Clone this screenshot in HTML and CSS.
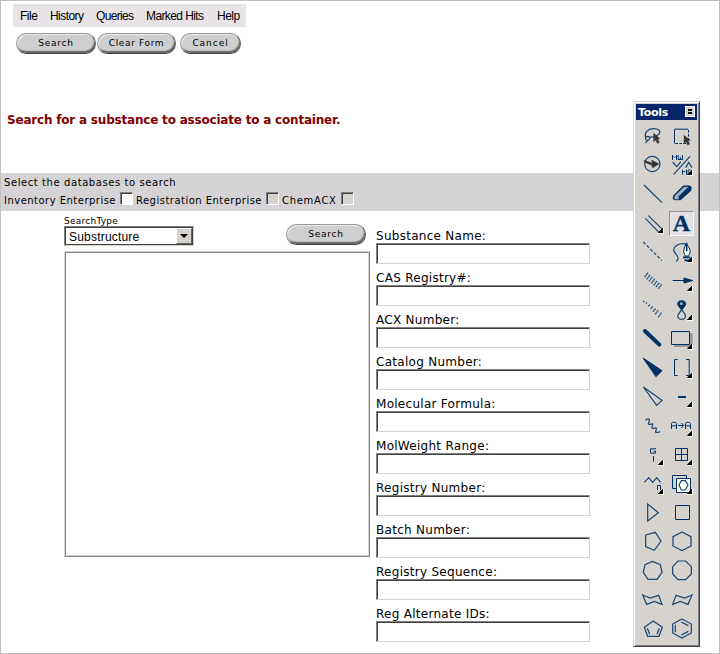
FILE: index.html
```html
<!DOCTYPE html>
<html lang="en">
<head>
<meta charset="utf-8">
<title>Substance search</title>
<link rel="stylesheet" href="styles.css">
</head>
<body>
<div class="page">
  <nav class="menu"><a class="m1">File</a><a class="m2">History</a><a class="m3">Queries</a><a class="m4">Marked Hits</a><a class="m5">Help</a></nav>
  <div class="actions">
    <button class="pill">Search</button><button class="pill clear">Clear Form</button><button class="pill cancel">Cancel</button>
  </div>
  <h1>Search for a substance to associate to a container.</h1>
  <section class="databases">
    <p>Select the databases to search</p>
    <div class="checks">
      <span class="c1">Inventory Enterprise</span><i class="box on"></i>
      <span class="c2">Registration Enterprise</span><i class="box"></i>
      <span class="c3">ChemACX</span><i class="box"></i>
    </div>
  </section>
  <main>
    <div class="left">
      <div class="type-row">
        <div>
          <div class="type-label">SearchType</div>
          <div class="select"><span>Substructure</span><i class="drop"></i></div>
        </div>
        <button class="pill">Search</button>
      </div>
      <div class="canvas"><div></div></div>
    </div>
    <form class="fields">
      <label><span>Substance Name:</span><input></label>
      <label><span>CAS Registry#:</span><input></label>
      <label><span>ACX Number:</span><input></label>
      <label><span>Catalog Number:</span><input></label>
      <label><span>Molecular Formula:</span><input></label>
      <label><span>MolWeight Range:</span><input></label>
      <label><span>Registry Number:</span><input></label>
      <label><span>Batch Number:</span><input></label>
      <label><span>Registry Sequence:</span><input></label>
      <label><span>Reg Alternate IDs:</span><input></label>
    </form>
  </main>
  <aside class="tools">
    <header><b>Tools</b><i class="toggle"></i></header>
    <div class="grid">
      <div><svg viewBox="33 72 87 87"><path class="soft" d="M60 128q-10-3-7-9c4-6 14-3 12 3s-12 8-12 14M53 118c-5-14 6-25 22-26s24 7 19 15c-4 6-16 10-31 11"/><path class="arrow" d="M77 106v25l6-5 5 10 6-3-5-10 7-1z"/></svg></div>
      <div><svg viewBox="120 72 87 87"><path d="M181 93.500H139.500v43"/><path d="M181.500 96v40.500H142" stroke-dasharray="8 4"/><path class="arrow" d="M168 112v24l6-5 5 10 6-3-5-10 7-1z"/></svg></div>

      <div><svg viewBox="33 159 87 87"><circle class="soft" cx="73" cy="198" r="23"/><path class="arrow" d="M48 187l25 8-2-9 22 12-20 12-1-8-22-9z"/></svg></div>
      <div class="more"><svg viewBox="120 159 87 87"><path d="M133.500 186v-15M136 175l3 3 3-3M145.500 171v15M150.500 171v14M157 177v8M163.500 171v14M150 184.500h14"/><path class="soft" d="M186 175l-49 54M134 192l12 14 12-14M173 209l9-16 10 16"/><path d="M163.500 230v-15M166 219l3 3 3-3M175.500 215v15M180.500 230v-14h7"/></svg></div>

      <div><svg viewBox="33 246 87 87"><path class="line" d="M48 261l54 53"/></svg></div>
      <div><svg viewBox="120 246 87 87"><path class="fill" stroke-linejoin="round" d="M136 294l30-30h20l3 3v10l-31 28h-20l-2-3z"/><path fill="#9fb0c0" stroke="none" d="M139 295l29-28h13l-29 28v9h-12z"/></svg></div>

      <div class="more"><svg viewBox="33 333 87 87"><path class="line" d="M52 361l42 43M61 353l42 41"/></svg></div>
      <div class="chosen"><span>A</span></div>

      <div><svg viewBox="33 6 87 87"><path class="line" stroke-dasharray="9 6" d="M46 18l55 55"/></svg></div>
      <div class="more"><svg viewBox="120 6 87 87"><path class="soft" d="M175 25c-20-8-40 7-37 20 2 9 14 13 12 24l-5 8"/><path fill="#fff" d="M175 23q-9 14-8 25l5 12h10l5-12q0-11-12-25z"/><path d="M176 20v26M165 64h22M169 73h16" stroke-width="5"/></svg></div>

      <div><svg viewBox="33 93 87 87"><path class="line" d="M50 123l10-13M56 130l10-13M63 136l10-13M70 142l10-13M77 148l10-13M84 153l10-13M91 158l10-13" stroke-dasharray="5 1"/></svg></div>
      <div class="more"><svg viewBox="120 93 87 87"><path d="M134 133.500h45"/><path class="fill" d="M168 126l26 7.500-26 7.500z"/></svg></div>

      <div><svg viewBox="33 180 87 87"><path class="line" d="M46 198l3-3M54 203l3-4M61 211l5-6M68 219l6-8M75 227l8-10M82 235l9-13M91 244l10-15" stroke-dasharray="5 1"/></svg></div>
      <div class="more"><svg viewBox="120 180 87 87"><path class="fill" d="M161 194c-11 0-15 9-10 15l10 14 10-14c5-6 1-15-10-15z"/><path class="soft" d="M161 221l-10 14c-4 7 0 15 10 15s14-8 10-15z"/><circle cx="160" cy="203" r="4" fill="#a7bdcf" stroke="none"/></svg></div>

      <div><svg viewBox="33 267 87 87"><path d="M51 285l43 41" stroke-width="12" stroke-linecap="round"/></svg></div>
      <div class="more"><svg viewBox="120 267 87 87"><path fill="#98979e" stroke="none" d="M138 292h56v41h-56z"/><path fill="#d6d3ce" d="M130.500 286.500h54v39h-54z"/></svg></div>

      <div><svg viewBox="33 0 87 87"><path class="fill" d="M45 12l57 38-18 18z"/></svg></div>
      <div class="more"><svg viewBox="120 0 87 87"><path d="M149 16.500h-9.500v48h9.500M174 16.500h9.500v48h-9.500"/></svg></div>

      <div><svg viewBox="33 87 87 87"><path class="line" d="M46 99l56 40-16 15z"/></svg></div>
      <div class="more"><svg viewBox="120 87 87 87"><path d="M150 129h24" stroke-width="6"/></svg></div>

      <div><svg viewBox="33 174 87 87"><path class="soft" d="M53 200c2-7 12-8 11 0s-6 10-1 11 12-5 11 2-6 9 0 10 11-5 11 2-6 9 0 10 8-2 12-1"/></svg></div>
      <div class="more"><svg viewBox="120 174 87 87"><path d="M130.500 225v-17l3-3h9l3 3v17M130 215.500h16M172.500 225v-17l3-3h9l3 3v17M172 215.500h16M150 214.500h17M160 207l7 7.500-7 7.500"/></svg></div>

      <div class="more"><svg viewBox="33 261 87 87"><path d="M84 284.500H67.500v13h15v-6H76M76.500 306v17"/></svg></div>
      <div class="more"><svg viewBox="120 261 87 87"><path d="M142.500 283.500h36v36h-36zM160.500 284v35M143 301.500h36"/></svg></div>

      <div class="more"><svg viewBox="33 0 87 87"><path class="soft" d="M49 37l13-14 12 14 12-14 12 14"/><path d="M88.500 60V46.500h9V60"/></svg></div>
      <div class="more"><svg viewBox="120 0 87 87"><path d="M133.500 16.500h42v39h-42z"/><path fill="#fff" d="M145.500 25.500h42v42h-42z"/><path class="soft" d="M160 32h12l8 13-8 15h-12l-7-15z"/></svg></div>

      <div><svg viewBox="33 87 87 87"><path class="soft" d="M59 102l32 26-32 25z"/></svg></div>
      <div><svg viewBox="120 87 87 87"><path d="M142.500 106.500h42v42h-42z"/></svg></div>

      <div><svg viewBox="33 174 87 87"><path class="soft" d="M53 195l29-8 17 26-20 28-26-11z"/></svg></div>
      <div><svg viewBox="120 174 87 87"><path class="soft" d="M162 186l27 14v28l-27 14-27-14v-28z"/></svg></div>

      <div><svg viewBox="33 261 87 87"><path class="soft" d="M73 274l24 10 5 23-15 21H60l-14-21 5-23z"/></svg></div>
      <div><svg viewBox="120 261 87 87"><path class="soft" d="M150 273h23l17 17v22l-17 17h-23l-16-17v-22z"/></svg></div>

      <div><svg viewBox="33 348 87 87"><path class="soft" d="M44 375l22 9 26-8 10 27-23-9-23 9z"/></svg></div>
      <div><svg viewBox="120 348 87 87"><path class="soft" d="M192 375l-22 9-26-8-10 27 23-9 23 9z"/></svg></div>

      <div><svg viewBox="33 435 87 87"><path class="soft" d="M76 453l27 19-10 27H59l-10-27zM58 475l7 18M94 475l-7 18"/></svg></div>
      <div><svg viewBox="120 435 87 87"><path class="soft" d="M162 447l28 15v27l-28 15-28-15v-27zM142 464v23M160 456l21 11M160 495l21-11"/></svg></div>
    </div>
  </aside>
</div>
</body>
</html>
```
FILE: styles.css
```css
* { box-sizing: border-box; }
body { margin: 0; background: #fff; color: #000; font-family: "DejaVu Sans", sans-serif; }
.page { position: relative; width: 720px; height: 654px; border: 1px solid #c0c0c0; overflow: hidden; white-space: nowrap; }
.menu { display: flex; width: 233px; height: 23px; margin: 3px 0 0 12px; padding-left: 7px; background: #e7e3e7; font: 12px/24px "Liberation Sans", sans-serif; }
.m1 { width: 30px; letter-spacing: -.5px; }
.m2 { width: 46px; letter-spacing: -.55px; }
.m3 { width: 50px; letter-spacing: -.65px; }
.m4 { width: 71px; letter-spacing: -.6px; }
.m5 { letter-spacing: -.5px; }
.actions { display: flex; gap: 1px; margin: 6px 0 0 15px; }
.pill { width: 80px; height: 21px; padding: 0 0 2px; border: 1px solid #999; border-right-color: #555; border-bottom-color: #444; border-radius: 11px; background: #cecece; box-shadow: inset 1px 1px 1px #eee, inset -1px -2px 1px #666; font: 9px/16px "DejaVu Sans", sans-serif; letter-spacing: .75px; color: #000; }
.pill.clear { width: 79px; letter-spacing: .65px; }
.pill.cancel { width: 61px; margin-left: 3px; letter-spacing: .95px; }
h1 { margin: 57px 0 0 6px; font: bold 12px/18px "DejaVu Sans", sans-serif; letter-spacing: -.2px; color: #800000; }
.databases { height: 38px; margin-top: 44px; padding-left: 3px; background: #d6d3d6; font-size: 10px; letter-spacing: .58px; }
.databases p { margin: 0; height: 18px; line-height: 19px; }
.checks { display: flex; height: 18px; line-height: 19px; }
.c1 { width: 116px; letter-spacing: .48px; }
.c2, .c3 { margin-left: 3px; }
.c2 { width: 130px; letter-spacing: .48px; }
.c3 { width: 59px; letter-spacing: .7px; }
.box { width: 13px; height: 13px; margin-top: 1px; background: #d6d3ce; border: 1px solid; border-color: #808080 #fff #fff #808080; box-shadow: inset 1px 1px #404040; }
.box.on { background: #fff; }
main { display: flex; margin: 4px 0 0 63px; }
.left { width: 312px; }
.type-row { display: flex; justify-content: space-between; width: 302px; height: 36px; }
.type-row .pill { margin-top: 9px; }
.type-label { height: 11px; font-size: 9px; line-height: 13px; letter-spacing: .25px; }
.select { display: flex; justify-content: space-between; width: 130px; height: 20px; padding: 0 0 0 4px; border: 1px solid; border-color: #808080 #d6d3ce #d6d3ce #808080; box-shadow: inset 1px 1px #404040, inset -1px -1px #404040; font: 12px/20px "Liberation Sans", sans-serif; letter-spacing: .2px; }
.drop { width: 16px; height: 16px; margin: 1px; background: #d6d3ce; border: 1px solid; border-color: #fff #666 #666 #fff; }
.drop::after { content: ""; display: block; margin: 5px 0 0 3px; width: 0; border: 4px solid transparent; border-top-color: #000; border-bottom: 0; }
.canvas { width: 306px; height: 306px; border: 1px solid; border-color: #d6d3ce #808080 #808080 #d6d3ce; }
.canvas div { height: 100%; border: 1px solid; border-color: #808080 #d6d3ce #d6d3ce #808080; }
.fields { margin-top: 12px; }
.fields label { display: block; height: 42px; font-size: 12px; letter-spacing: .28px; }
.fields span { display: block; height: 16px; line-height: 19px; }
.fields input { display: block; width: 214px; height: 21px; padding: 0 3px; border: 1px solid; border-color: #808080 #d6d3ce #d6d3ce #808080; border-radius: 0; box-shadow: inset 1px 1px #404040; outline: 0; }
.tools { position: absolute; left: 632px; top: 100px; width: 67px; height: 546px; border: 1px solid; border-color: #d6d3ce #404040 #404040 #d6d3ce; background: #d6d3ce; box-shadow: inset 1px 1px #fff, inset -1px -1px #808080; padding: 2px; }
.tools header { display: flex; justify-content: space-between; height: 16px; padding: 0 2px; background: #08246b; color: #fff; font: bold 11px/17px "DejaVu Sans", sans-serif; letter-spacing: -.3px; }
.toggle { width: 10px; height: 11px; margin: 2px 0; background: #d6d3ce; border: 1px solid #fff; }
.toggle::after { content: ""; display: block; width: 4px; height: 1px; margin: 2px; border: solid #000; border-width: 2px 0; }
.grid { display: grid; grid-template-columns: 29px 29px; grid-auto-rows: 29px; margin: 2px 0 0 3px; }
.grid > div { position: relative; }
svg { display: block; width: 29px; height: 29px; overflow: visible; fill: none; stroke: #003163; stroke-width: 3; }
.soft { stroke: #1d4874; stroke-width: 3.7; }
.line { stroke: #174572; stroke-width: 3.7; }
.fill { fill: #003163; }
.arrow { fill: #333; stroke: #444; stroke-width: 1.5; }
.more::after { content: ""; position: absolute; left: 19px; top: 19px; width: 5px; height: 5px; border: solid #fff; border-width: 0 1px 1px 0; background: linear-gradient(135deg, #fff 40%, #000 44%); clip-path: polygon(75% 0, 100% 0, 100% 100%, 0 100%, 0 75%); }
.chosen span { display: block; width: 25px; height: 25px; margin: 2px 1px; border: 1px solid; border-color: #949194 #fff #fff #949194; background: #e4e2e4; font: bold 24px/23px "Liberation Serif", serif; color: #003163; text-align: center; -webkit-text-stroke: .3px #003163; }
```
